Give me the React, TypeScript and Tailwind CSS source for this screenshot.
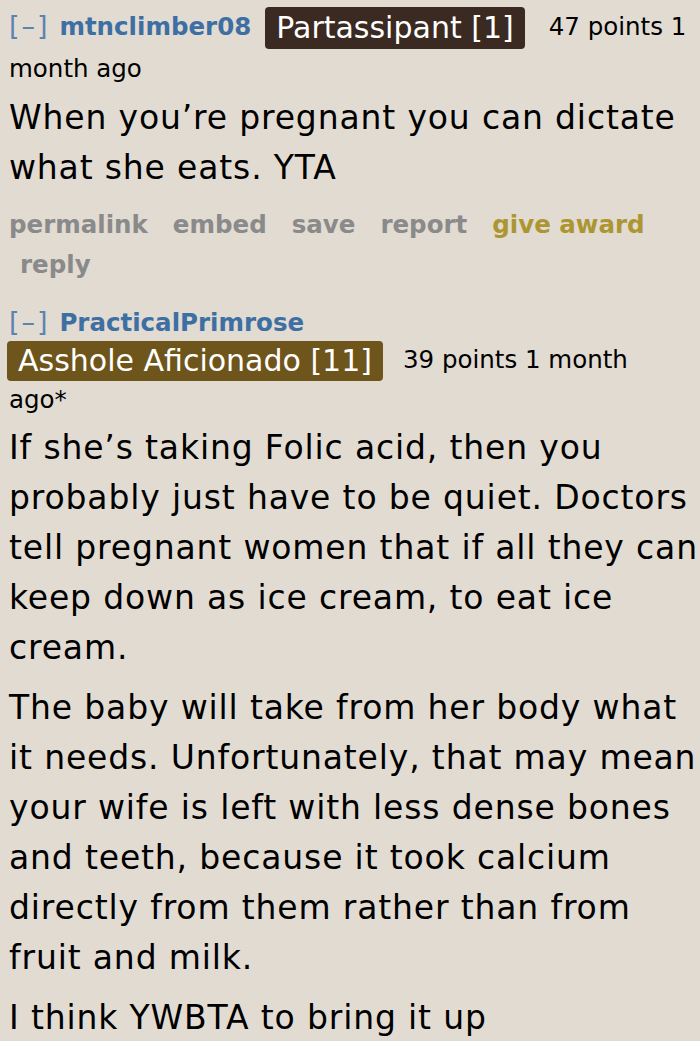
export default function App() {
  return (
    <div className="min-h-[1041px] w-[700px] overflow-hidden bg-[#e2dbd2] pl-[9px] pt-[7px] text-black [font-family:'DejaVu_Sans',Verdana,sans-serif]">
      {/* first comment */}
      <div className="text-[24.5px] leading-[40px]">
        <span className="mr-[2px] text-[27px] leading-none tracking-[2px] text-[#5b84b3]">[–]</span>{' '}
        <span className="font-bold text-[#3e6fa3]">mtnclimber08</span>
        <span className="ml-[14px] inline-block rounded-[4px] bg-[#3b2a22] px-[11px] align-middle text-[30px] leading-[42px] text-white">Partassipant [1]</span>
        <span className="ml-[24px]">47 points 1 month ago</span>
      </div>
      <div className="mt-[4px] text-[33px] leading-[50px] tracking-[0.85px]">
        <p>When you’re pregnant you can dictate what she eats. YTA</p>
      </div>
      <div className="mt-[12px] text-[24.5px] font-bold leading-[40px] text-[#8a8a8a]">
        <span className="mr-[25px]">permalink</span>
        <span className="mr-[25px]">embed</span>
        <span className="mr-[25px]">save</span>
        <span className="mr-[25px]">report</span>
        <span className="text-[#ab9632]">give award</span>
        <br />
        <span className="ml-[11px]">reply</span>
      </div>

      {/* second comment */}
      <div className="mt-[19px] text-[24.5px] leading-[37px]">
        <div>
          <span className="mr-[2px] text-[27px] leading-none tracking-[2px] text-[#5b84b3]">[–]</span>{' '}
          <span className="font-bold text-[#3e6fa3]">PracticalPrimrose</span>
        </div>
        <div>
          <span className="ml-[-2px] inline-block rounded-[4px] bg-[#6e551b] px-[11px] align-middle text-[30px] leading-[40px] text-white">Asshole Aficionado [11]</span>
          <span className="ml-[20px]">39 points 1 month</span>
          <br />
          <span>ago*</span>
        </div>
      </div>
      <div className="mr-[-9px] mt-[5px] space-y-[10px] text-[33px] leading-[50px] tracking-[0.85px]">
        <p>If she’s taking Folic acid, then you probably just have to be quiet. Doctors tell pregnant women that if all they can keep down as ice cream, to eat ice cream.</p>
        <p>The baby will take from her body what it needs. Unfortunately, that may mean your wife is left with less dense bones and teeth, because it took calcium directly from them rather than from fruit and milk.</p>
        <p>I think YWBTA to bring it up</p>
      </div>
    </div>
  )
}
